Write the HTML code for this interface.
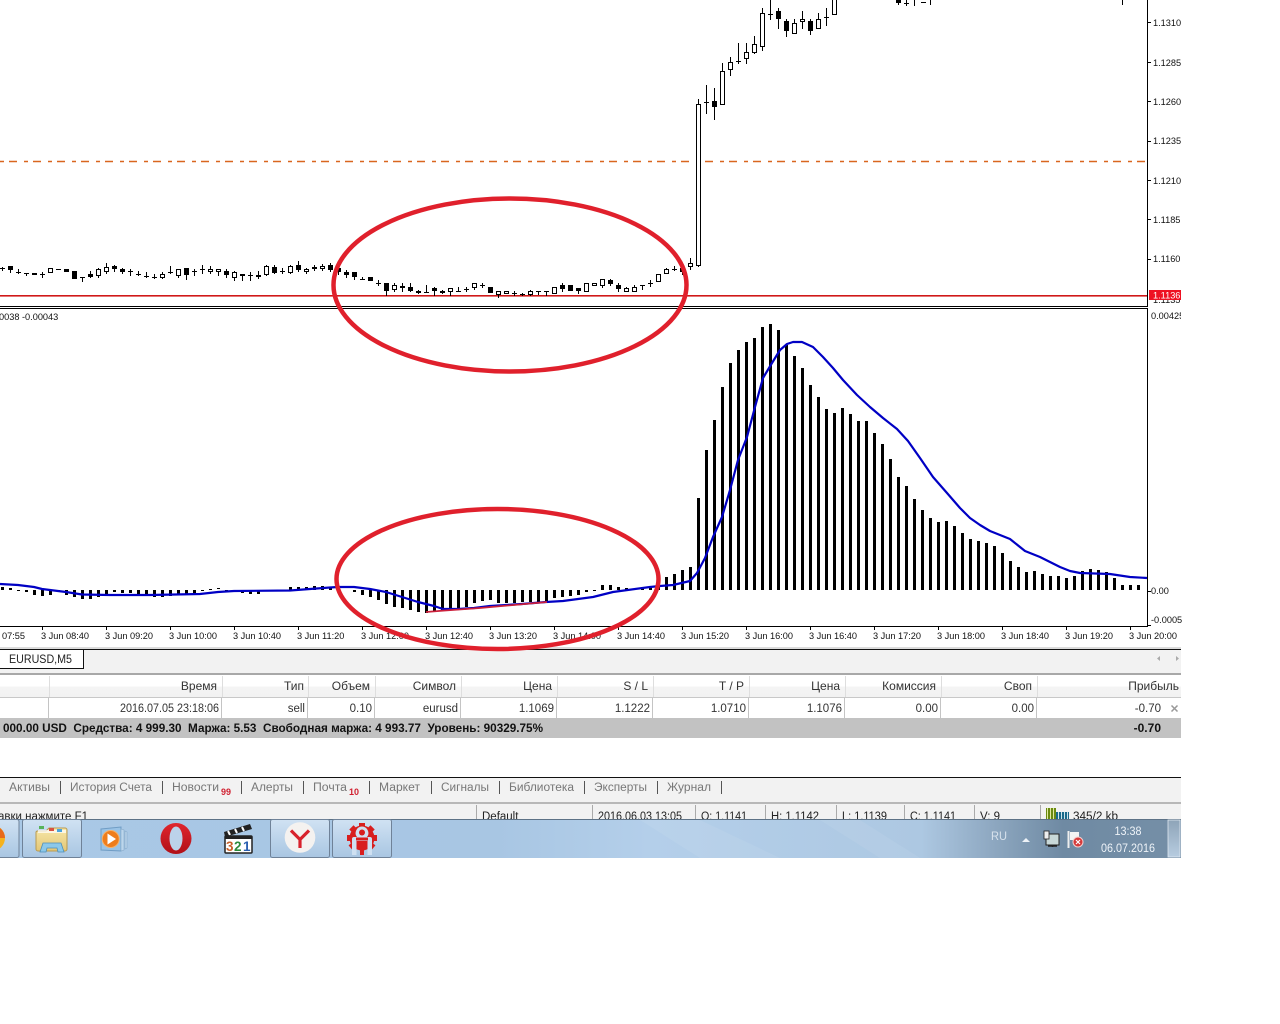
<!DOCTYPE html>
<html><head><meta charset="utf-8"><style>
html,body{margin:0;padding:0;background:#fff;width:1280px;height:1024px;overflow:hidden}
svg{display:block}
text{font-family:"Liberation Sans","DejaVu Sans",sans-serif;fill:#222}
.a text{font-size:9.2px;fill:#111}
.t text{font-size:9.2px;fill:#111}
.h text{font-size:11.5px;text-anchor:end;fill:#333}
.hh text{font-size:12px;text-anchor:end;fill:#333}
.m text{font-size:11.5px;fill:#777}
.s text{font-size:11.5px;fill:#222}
</style></head><body>
<svg width="1280" height="1024" viewBox="0 0 1280 1024" xmlns="http://www.w3.org/2000/svg">
<defs>
<linearGradient id="tb" x1="0" x2="1" y1="0" y2="0">
<stop offset="0" stop-color="#a9c8e6"/><stop offset=".42" stop-color="#a8c6e3"/><stop offset=".55" stop-color="#b4cfea"/><stop offset=".78" stop-color="#adc8e2"/><stop offset=".84" stop-color="#8ea8c1"/><stop offset=".9" stop-color="#6f8aa3"/><stop offset="1" stop-color="#758fa7"/>
</linearGradient>
<linearGradient id="hd" x1="0" x2="0" y1="0" y2="1"><stop offset="0" stop-color="#fff"/><stop offset=".5" stop-color="#fff"/><stop offset=".55" stop-color="#f4f4f4"/><stop offset="1" stop-color="#f2f2f2"/></linearGradient>
<linearGradient id="bt" x1="0" x2="0" y1="0" y2="1"><stop offset="0" stop-color="#d0e2f3"/><stop offset="1" stop-color="#a9c6e2"/></linearGradient>
<linearGradient id="fo" x1="0" x2="0" y1="0" y2="1"><stop offset="0" stop-color="#f7e7a8"/><stop offset="1" stop-color="#e3c777"/></linearGradient>
<linearGradient id="sd" x1="0" x2="0" y1="0" y2="1"><stop offset="0" stop-color="#8ea4b8"/><stop offset="1" stop-color="#b7cce0"/></linearGradient>
<linearGradient id="op" x1="0" x2="0" y1="0" y2="1"><stop offset="0" stop-color="#e0262e"/><stop offset="1" stop-color="#b01018"/></linearGradient>
</defs>
<rect width="1280" height="1024" fill="#fff"/>

<!-- colored horizontal lines -->
<rect x="0" y="295" width="1148" height="1.600" fill="#d01818"/>
<path d="M0 161.500H1148" stroke="#d9661f" stroke-width="1.600" fill="none" stroke-dasharray="8 7 4 5" stroke-dashoffset="15"/>

<!-- main chart -->
<g shape-rendering="crispEdges">
<path d="M2.5 267V271M10.5 266V273M18.5 269V274M26.5 273V276M42.5 272V278M82.5 277V282M90.5 271V278M98.5 268V278M106.5 263V274M114.5 265V272M122.5 268V274M130.5 269V276M138.5 271V276M146.5 272V278M154.5 274V279M162.5 272V279M170.5 266V274M178.5 269V278M186.5 268V280M194.5 269V276M202.5 265V274M210.5 266V274M218.5 269V276M226.5 269V278M234.5 271V281M242.5 274V281M250.5 272V281M258.5 271V279M266.5 265V276M274.5 265V274M282.5 268V274M290.5 265V274M298.5 261V272M306.5 268V274M314.5 265V271M322.5 264V271M330.5 263V272M338.5 267V275M346.5 270V278M354.5 272V280M362.5 277V280M378.5 280V286M386.5 283V296M394.5 283V292M402.5 283V292M410.5 283V292M418.5 290V294M426.5 285V293M434.5 287V296M442.5 290V294M450.5 288V296M458.5 287V292M466.5 287V292M474.5 283V290M482.5 283V288M498.5 291V298M514.5 291V296M522.5 293V296M530.5 290V296M538.5 291V295M546.5 291V296M562.5 283V292M578.5 288V294M602.5 279V288M610.5 279V286M618.5 283V292M626.5 287V292M634.5 285V292M642.5 285V290M650.5 280V287M666.5 268V274M674.5 266V271M682.5 268V275M690.5 258V270M698.5 99V267M706.5 85V114M714.5 88V120M722.5 63V72M730.5 57V76M738.5 43V64M746.5 43V64M754.5 36V54M762.5 8V51M770.5 0V20M778.5 8V29M786.5 19V37M794.5 19V34M802.5 11V29M810.5 19V35M818.5 13V29M826.5 8V26M898.5 0V5M906.5 0V6M914.5 0V6M930.5 0V5M1122.5 0V5
M0 268.5h5M16 272.5h5M24 273.5h5M40 274.5h5M56 269.5h5M80 277.5h5M128 271.5h5M136 274.5h5M144 276.5h5M152 277.5h5M168 272.5h5M192 271.5h5M200 269.5h5M248 275.5h5M280 271.5h5M360 279.5h5M376 283.5h5M424 292.5h5M456 291.5h5M464 289.5h5M480 285.5h5M512 293.5h5M520 294.5h5M536 291.5h5M544 291.5h5M640 285.5h5M648 283.5h5M672 269.5h5M704 102.5h5M736 61.5h5M768 14.5h5M824 17.5h5M904 3.5h5M921 2.5h5" stroke="#000" stroke-width="1" fill="none"/>
<path d="M32.5 273.5h4v1h-4zM48.5 268.5h4v4h-4zM96.5 269.5h4v6h-4zM104.5 267.5h4v4h-4zM160.5 274.5h4v3h-4zM176.5 269.5h4v6h-4zM208.5 269.5h4v2h-4zM216.5 269.5h4v2h-4zM232.5 272.5h4v5h-4zM264.5 266.5h4v8h-4zM288.5 266.5h4v6h-4zM304.5 269.5h4v2h-4zM320.5 266.5h4v2h-4zM392.5 285.5h4v4h-4zM448.5 288.5h4v3h-4zM472.5 283.5h4v4h-4zM496.5 291.5h4v3h-4zM504.5 291.5h4v2h-4zM528.5 291.5h4v3h-4zM552.5 287.5h4v6h-4zM584.5 283.5h4v8h-4zM592.5 283.5h4v2h-4zM600.5 279.5h4v6h-4zM624.5 288.5h4v3h-4zM632.5 287.5h4v4h-4zM656.5 274.5h4v7h-4zM664.5 269.5h4v4h-4zM688.5 263.5h4v3h-4zM696.5 104.5h4v161h-4zM720.5 71.5h4v33h-4zM728.5 62.5h4v7h-4zM744.5 52.5h4v6h-4zM752.5 44.5h4v8h-4zM760.5 13.5h4v33h-4zM792.5 23.5h4v10h-4zM800.5 19.5h4v2h-4zM816.5 19.5h4v9h-4zM832.5 -3.5h4v18h-4z" fill="#fff" stroke="#000" stroke-width="1"/>
<path d="M8 266h5v4h-5zM64 269h5v3h-5zM72 271h5v8h-5zM88 274h5v3h-5zM112 266h5v3h-5zM120 269h5v3h-5zM184 268h5v7h-5zM224 271h5v4h-5zM240 274h5v2h-5zM256 275h5v2h-5zM272 267h5v6h-5zM296 265h5v5h-5zM312 267h5v2h-5zM328 265h5v5h-5zM336 268h5v4h-5zM344 272h5v3h-5zM352 272h5v5h-5zM368 277h5v4h-5zM384 283h5v8h-5zM400 286h5v2h-5zM408 287h5v4h-5zM416 291h5v2h-5zM432 288h5v3h-5zM440 291h5v2h-5zM488 287h5v6h-5zM560 285h5v4h-5zM568 285h5v6h-5zM576 288h5v3h-5zM608 280h5v4h-5zM616 285h5v4h-5zM680 268h5v4h-5zM712 101h5v6h-5zM776 11h5v8h-5zM784 21h5v10h-5zM808 21h5v10h-5zM896 0h5v3h-5z" fill="#000"/>

<!-- frame lines -->
<path d="M1147.5 0V306M0 306.5H1148M0 308.5H1148M1147.5 309V627M0 626.5H1148" stroke="#000" stroke-width="1" fill="none"/>
<path d="M1148 22.5h3M1148 62.5h3M1148 101.5h3M1148 141.5h3M1148 180.5h3M1148 219.5h3M1148 259.5h3M1148 591.5h3M1148 625.5h3" stroke="#000" fill="none"/>
<path d="M42.5 627v3M106.5 627v3M170.5 627v3M234.5 627v3M298.5 627v3M362.5 627v3M426.5 627v3M490.5 627v3M554.5 627v3M618.5 627v3M682.5 627v3M746.5 627v3M810.5 627v3M874.5 627v3M938.5 627v3M1002.5 627v3M1066.5 627v3M1130.5 627v3" stroke="#000" fill="none"/>

<!-- histogram -->
<path d="M2.5 590V587M10.5 590V588M18.5 590V591M26.5 590V592M34.5 590V595M42.5 590V596M50.5 590V595M58.5 590V592M66.5 590V595M74.5 590V597M82.5 590V599M90.5 590V599M98.5 590V597M106.5 590V595M114.5 590V592M122.5 590V593M130.5 590V593M138.5 590V595M146.5 590V595M154.5 590V597M162.5 590V597M170.5 590V596M178.5 590V594M186.5 590V594M194.5 590V593M202.5 590V591M210.5 589V590M218.5 588V589M226.5 590V592M234.5 590V592M242.5 590V593M250.5 590V594M258.5 590V594M290.5 587V590M298.5 587V590M306.5 587V590M314.5 586V590M322.5 586V590M330.5 587V590M354.5 590V592M362.5 590V595M370.5 590V597M378.5 590V600M386.5 590V604M394.5 590V607M402.5 590V608M410.5 590V610M418.5 590V612M426.5 590V613M434.5 590V612M442.5 590V610M450.5 590V609M458.5 590V608M466.5 590V607M474.5 590V603M482.5 590V601M490.5 590V600M498.5 590V603M506.5 590V603M514.5 590V603M522.5 590V602M530.5 590V602M538.5 590V602M546.5 590V601M554.5 590V598M562.5 590V597M570.5 590V596M578.5 590V595M586.5 590V592M594.5 590V591M602.5 590V585M610.5 590V585M618.5 590V587M626.5 590V588M634.5 590V589M642.5 590V587M650.5 590V587M658.5 590V584M666.5 590V577M674.5 590V574M682.5 590V570M690.5 590V567M698.5 590V498M706.5 590V450M714.5 590V420M722.5 590V387M730.5 590V363M738.5 590V350M746.5 590V342M754.5 590V338M762.5 590V327M770.5 590V324M778.5 590V330M786.5 590V345M794.5 590V356M802.5 590V368M810.5 590V385M818.5 590V397M826.5 590V409M834.5 590V413M842.5 590V408M850.5 590V414M858.5 590V421M866.5 590V421M874.5 590V433M882.5 590V444M890.5 590V459M898.5 590V477M906.5 590V486M914.5 590V499M922.5 590V510M930.5 590V518M938.5 590V522M946.5 590V521M954.5 590V526M962.5 590V533M970.5 590V539M978.5 590V541M986.5 590V543M994.5 590V546M1002.5 590V553M1010.5 590V561M1018.5 590V567M1026.5 590V572M1034.5 590V571M1042.5 590V574M1050.5 590V576M1058.5 590V576M1066.5 590V578M1074.5 590V576M1082.5 590V571M1090.5 590V569M1098.5 590V570M1106.5 590V572M1114.5 590V578M1122.5 590V585M1130.5 590V585M1138.5 590V585" stroke="#000" stroke-width="3" fill="none"/>
</g>
<!-- signal line -->
<path d="M0 584L18 585L34 587L42 589L50 590L66 592L82 594.5L110 595L150 595L200 594L218 592L234 591L290 590.5L330 587.5L338 587L354 587L370 589L386 592L402 597L418 602L434 606L443 609L458 609L474 608L490 606L522 604L546 602L563 601L593 597L613 592L650 587L660 586L673 585L690 581L697 573L705 558L713 537L722 517L730 490L738 460L747 437L755 407L763 378L772 363L780 350L787 344L793 342L802 342L813 347L823 357L833 368L843 380L857 395L870 407L883 418L897 429L908 441L920 458L933 477L947 493L960 508L970 518L980 525L990 531L1010 539L1025 551L1040 557L1060 567L1070 571L1080 573L1110 574L1130 577L1147 578" fill="none" stroke="#0000c4" stroke-width="2.200" stroke-linejoin="round"/>
<path d="M426 612L445 610.500L480 608L547 602" fill="none" stroke="#cc1f3a" stroke-width="1.800"/>

<!-- axis labels -->
<g class="a">
<text x="1153" y="26">1.1310</text>
<text x="1153" y="66">1.1285</text>
<text x="1153" y="105">1.1260</text>
<text x="1153" y="144">1.1235</text>
<text x="1153" y="184">1.1210</text>
<text x="1153" y="223">1.1185</text>
<text x="1153" y="262">1.1160</text>
<text x="1151" y="594">0.00</text>
<text x="1151" y="623">-0.0005</text>
</g>
<svg x="1148" y="286" width="33" height="36" viewBox="1148 286 33 36">
<g class="a"><text x="1153" y="303">1.1135</text></g>
<rect x="1149" y="290" width="32" height="10" fill="#ee1122"/>
<text x="1153" y="298.500" font-size="9.200" style="fill:#fff">1.1136</text>
<text x="1151" y="319" font-size="9.200" style="fill:#111">0.00425</text>
</svg>
<text x="-1" y="320" font-size="9.200" style="fill:#111">0038 -0.00043</text>

<!-- time labels -->
<g class="t">
<text x="2" y="639">07:55</text>
<text x="41" y="639">3 Jun 08:40</text>
<text x="105" y="639">3 Jun 09:20</text>
<text x="169" y="639">3 Jun 10:00</text>
<text x="233" y="639">3 Jun 10:40</text>
<text x="297" y="639">3 Jun 11:20</text>
<text x="361" y="639">3 Jun 12:00</text>
<text x="425" y="639">3 Jun 12:40</text>
<text x="489" y="639">3 Jun 13:20</text>
<text x="553" y="639">3 Jun 14:00</text>
<text x="617" y="639">3 Jun 14:40</text>
<text x="681" y="639">3 Jun 15:20</text>
<text x="745" y="639">3 Jun 16:00</text>
<text x="809" y="639">3 Jun 16:40</text>
<text x="873" y="639">3 Jun 17:20</text>
<text x="937" y="639">3 Jun 18:00</text>
<text x="1001" y="639">3 Jun 18:40</text>
<text x="1065" y="639">3 Jun 19:20</text>
<text x="1129" y="639">3 Jun 20:00</text>
</g>

<!-- tab bar -->
<g shape-rendering="crispEdges">
<rect x="0" y="647" width="1181" height="2" fill="#dcdcdc"/>
<rect x="0" y="650" width="1181" height="23" fill="#f2f2f2"/>
<rect x="0" y="649" width="1181" height="1" fill="#111"/>
<rect x="0" y="650" width="83" height="18" fill="#fff"/>
<path d="M83.500 650V668.500H0" stroke="#111" fill="none"/>
<rect x="0" y="673" width="1181" height="2" fill="#a8a8a8"/>
<rect x="0" y="675" width="1181" height="22" fill="url(#hd)"/>
<rect x="0" y="697" width="1181" height="1" fill="#c8c8c8"/>
<rect x="0" y="698" width="1181" height="20" fill="#fff"/>
<rect x="0" y="718" width="1181" height="20" fill="#c2c2c2"/>
<path d="M49.500 676v21M222.500 676v21M308.500 676v21M375.500 676v21M461.500 676v21M557.500 676v21M653.500 676v21M749.500 676v21M845.500 676v21M941.500 676v21M1037.500 676v21" stroke="#dedede" fill="none"/>
<path d="M48.500 698v20M221.500 698v20M307.500 698v20M374.500 698v20M460.500 698v20M556.500 698v20M652.500 698v20M748.500 698v20M844.500 698v20M940.500 698v20M1036.500 698v20" stroke="#c4c4c4" fill="none"/>
</g>
<text x="9" y="663" font-size="11.500" textLength="63" lengthAdjust="spacingAndGlyphs">EURUSD,M5</text>
<path d="M1160 656l-3 2.500 3 2.500zM1176 656l3 2.500-3 2.500z" fill="#aaa"/>
<g class="hh">
<text x="217" y="690">Время</text>
<text x="304" y="690">Тип</text>
<text x="370" y="690">Объем</text>
<text x="456" y="690">Символ</text>
<text x="552" y="690">Цена</text>
<text x="648" y="690">S / L</text>
<text x="744" y="690">T / P</text>
<text x="840" y="690">Цена</text>
<text x="936" y="690">Комиссия</text>
<text x="1032" y="690">Своп</text>
<text x="1179" y="690">Прибыль</text>
</g>
<g class="h">
<text x="219" y="712" textLength="99" lengthAdjust="spacingAndGlyphs">2016.07.05 23:18:06</text>
<text x="305" y="712">sell</text>
<text x="372" y="712">0.10</text>
<text x="458" y="712">eurusd</text>
<text x="554" y="712">1.1069</text>
<text x="650" y="712">1.1222</text>
<text x="746" y="712">1.0710</text>
<text x="842" y="712">1.1076</text>
<text x="938" y="712">0.00</text>
<text x="1034" y="712">0.00</text>
<text x="1161" y="712">-0.70</text>
</g>
<path d="M1171.500 705.500l6 6M1177.500 705.500l-6 6" stroke="#999" stroke-width="1.500" fill="none"/>
<text x="3" y="732" font-size="11.500" font-weight="bold" textLength="540" lengthAdjust="spacingAndGlyphs" style="fill:#111;white-space:pre" xml:space="preserve">000.00 USD  Средства: 4 999.30  Маржа: 5.53  Свободная маржа: 4 993.77  Уровень: 90329.75%</text>
<text x="1161" y="732" font-size="12" font-weight="bold" text-anchor="end" style="fill:#111">-0.70</text>

<!-- terminal tabs -->
<g shape-rendering="crispEdges">
<rect x="0" y="777" width="1181" height="1" fill="#111"/>
<rect x="0" y="778" width="1181" height="24" fill="#f2f2f2"/>
<rect x="0" y="802" width="1181" height="2" fill="#b8b8b8"/>
<rect x="0" y="804" width="1181" height="16" fill="#f2f2f2"/>
<path d="M60.500 781v13M162.500 781v13M241.500 781v13M303.500 781v13M369.500 781v13M431.500 781v13M499.500 781v13M584.500 781v13M657.500 781v13M721.500 781v13" stroke="#555" fill="none"/>
<path d="M476.500 805v15M592.500 805v15M695.500 805v15M765.500 805v15M836.500 805v15M904.500 805v15M974.500 805v15M1040.500 805v15" stroke="#aaa" fill="none"/>
</g>
<g class="m">
<text x="9" y="791" textLength="41" lengthAdjust="spacingAndGlyphs">Активы</text>
<text x="70" y="791" textLength="82" lengthAdjust="spacingAndGlyphs">История Счета</text>
<text x="172" y="791" textLength="47" lengthAdjust="spacingAndGlyphs">Новости</text>
<text x="251" y="791" textLength="42" lengthAdjust="spacingAndGlyphs">Алерты</text>
<text x="313" y="791" textLength="34" lengthAdjust="spacingAndGlyphs">Почта</text>
<text x="379" y="791" textLength="41" lengthAdjust="spacingAndGlyphs">Маркет</text>
<text x="441" y="791" textLength="48" lengthAdjust="spacingAndGlyphs">Сигналы</text>
<text x="509" y="791" textLength="65" lengthAdjust="spacingAndGlyphs">Библиотека</text>
<text x="594" y="791" textLength="53" lengthAdjust="spacingAndGlyphs">Эксперты</text>
<text x="667" y="791" textLength="44" lengthAdjust="spacingAndGlyphs">Журнал</text>
</g>
<text x="221" y="795" font-size="9" font-weight="bold" style="fill:#d02030">99</text>
<text x="349" y="795" font-size="9" font-weight="bold" style="fill:#d02030">10</text>
<g class="s">
<text x="-2" y="820" textLength="90" lengthAdjust="spacingAndGlyphs">авки нажмите F1</text>
<text x="482" y="820">Default</text>
<text x="598" y="820" textLength="84" lengthAdjust="spacingAndGlyphs">2016.06.03 13:05</text>
<text x="701" y="820" textLength="46" lengthAdjust="spacingAndGlyphs">O: 1.1141</text>
<text x="771" y="820" textLength="48" lengthAdjust="spacingAndGlyphs">H: 1.1142</text>
<text x="842" y="820" textLength="45" lengthAdjust="spacingAndGlyphs">L: 1.1139</text>
<text x="910" y="820" textLength="46" lengthAdjust="spacingAndGlyphs">C: 1.1141</text>
<text x="980" y="820">V: 9</text>
<text x="1073" y="820" textLength="45" lengthAdjust="spacingAndGlyphs">345/2 kb</text>
</g>
<g shape-rendering="crispEdges">
<rect x="1046" y="808" width="10" height="12" fill="#6a8a10"/>
<path d="M1047.500 808v12M1050.500 808v12M1053.500 808v12" stroke="#dfe8a0" fill="none"/>
<rect x="1056" y="812" width="13" height="8" fill="#1a6a8a"/>
<path d="M1058.500 812v8M1061.500 812v8M1064.500 812v8M1067.500 812v8" stroke="#cfe4ea" fill="none"/>
</g>

<!-- taskbar -->
<rect x="0" y="819" width="1181" height="39" fill="url(#tb)"/>
<rect x="0" y="819" width="1181" height="1" fill="#5d7286"/>
<path d="M640 820L700 858H780L700 820zM820 820L880 858H920L860 820z" fill="#fff" opacity=".07"/>
<!-- buttons -->
<g fill="url(#bt)" stroke="#6f8298" stroke-width="1">
<rect x="-5" y="819.500" width="24" height="38" rx="2"/>
<rect x="22.500" y="819.500" width="59" height="38" rx="2"/>
<rect x="270.500" y="819.500" width="59" height="38" rx="2"/>
<rect x="332.500" y="819.500" width="59" height="38" rx="2"/>
</g>
<!-- left partial icon -->
<circle cx="-8" cy="838" r="13" fill="#f5b21e"/>
<path d="M0 828a13 13 0 0 1 5 10h-5z" fill="#e86a1a"/>
<!-- folder -->
<path d="M37 831h9l3-3h16a2 2 0 0 1 2 2v19a2 2 0 0 1-2 2H38a2 2 0 0 1-2-2V832z" fill="url(#fo)" stroke="#b89a50"/>
<path d="M38 830h28v3H38z" fill="#fff" opacity=".7"/>
<rect x="39" y="826" width="5" height="3" fill="#56b35a"/><rect x="49" y="828" width="5" height="3" fill="#d8513f"/><rect x="57" y="829" width="5" height="3" fill="#4aa3dc"/>
<path d="M43 843h18l3 9h-6l-1-4H47l-1 4h-6z" fill="#8cc8ea" stroke="#4f8fb8" stroke-width=".8"/>
<!-- media player -->
<path d="M101 829l20-2v24l-20-1z" fill="#9ac3e6" stroke="#6f9cc4"/>
<path d="M121 829l3 1v20l-3 1zM125 831l2 1v16l-2 1z" fill="#bcd6ec" stroke="#86aac9" stroke-width=".6"/>
<circle cx="110.700" cy="839" r="8.500" fill="#ee7d1c" stroke="#f6b26a" stroke-width="1"/>
<path d="M107.500 833.500l8.500 5.500-8.500 5.500z" fill="#fff"/>
<!-- opera -->
<ellipse cx="176" cy="838.500" rx="15.500" ry="15.500" fill="url(#op)"/>
<ellipse cx="176" cy="838.500" rx="6.500" ry="12" fill="#bcd2ea"/>
<!-- clapper -->
<path d="M224 832l26-8 2 5-27 8z" fill="#222"/>
<path d="M228 831l2 4M235 829l2 4M242 827l2 4" stroke="#fff" stroke-width="2"/>
<rect x="225" y="836" width="27" height="17" rx="1" fill="#fff" stroke="#222" stroke-width="1.500"/>
<rect x="225" y="836" width="27" height="3" fill="#222"/>
<text x="226" y="851" font-size="13.500" font-weight="bold" style="fill:#c8602a">3</text>
<text x="234" y="851" font-size="13.500" font-weight="bold" style="fill:#2a8a3a">2</text>
<text x="243" y="851" font-size="13.500" font-weight="bold" style="fill:#2a5fb0">1</text>
<!-- yandex -->
<circle cx="300" cy="837.500" r="15.300" fill="#f4f2f0"/>
<path d="M291 830.500L300 839.500V848M309 830.500L300 839.500" fill="none" stroke="#d8222c" stroke-width="3.200"/>
<!-- gear -->
<g fill="#d81e1e">
<circle cx="362" cy="838" r="12.500"/>
<g id="teeth">
<path d="M359 823h6v5h-6z"/>
<path d="M359 823h6v5h-6z" transform="rotate(45 362 838)"/>
<path d="M359 823h6v5h-6z" transform="rotate(-45 362 838)"/>
<path d="M359 823h6v5h-6z" transform="rotate(90 362 838)"/>
<path d="M359 823h6v5h-6z" transform="rotate(-90 362 838)"/>
<path d="M359 823h6v5h-6z" transform="rotate(130 362 838)"/>
<path d="M359 823h6v5h-6z" transform="rotate(-130 362 838)"/>
</g>
<path d="M362 826.500a6.500 6.500 0 0 1 5 10.500h3a2 2 0 0 1 2 2V855h-4.500V841h-3.500V855H360V841h-3.500V855H352V839a2 2 0 0 1 2-2h3a6.500 6.500 0 0 1 5-10.500z" fill="#cfe0f1"/>
<path d="M360 841h4v14h-4z"/>
<path d="M356 837.500h12v3h-12z"/>
<circle cx="362" cy="832.500" r="3"/>
</g>
<!-- tray -->
<text x="991" y="840" font-size="12" style="fill:#d8e2ec" textLength="16" lengthAdjust="spacingAndGlyphs">RU</text>
<path d="M1022 842l4-4 4 4z" fill="#eef3f8"/>
<rect x="1046" y="834" width="13" height="11" fill="#c8d8d8" stroke="#222" stroke-width="1"/>
<path d="M1048 846h9M1052.500 845v2" stroke="#222" stroke-width="1.500"/>
<rect x="1044" y="831" width="5" height="8" fill="#eee" stroke="#222" stroke-width=".8"/>
<path d="M1068.500 831v17" stroke="#eee" stroke-width="2"/>
<path d="M1070 832h9v8h-9z" fill="#f4f4f4"/>
<circle cx="1078" cy="842" r="5" fill="#d63a3a" stroke="#f4d0d0"/>
<path d="M1076 840l4 4M1080 840l-4 4" stroke="#fff" stroke-width="1.200"/>
<text x="1128" y="835" font-size="12" text-anchor="middle" style="fill:#eef3f8" textLength="27" lengthAdjust="spacingAndGlyphs">13:38</text>
<text x="1128" y="852" font-size="12" text-anchor="middle" style="fill:#eef3f8" textLength="54" lengthAdjust="spacingAndGlyphs">06.07.2016</text>
<rect x="1168" y="820" width="12" height="37" fill="url(#sd)" stroke="#dfe8f0" stroke-width=".8"/>

<!-- annotation ellipses -->
<ellipse cx="510" cy="285" rx="176.500" ry="86.500" fill="none" stroke="#e0202c" stroke-width="4.500"/>
<ellipse cx="497.500" cy="579" rx="161" ry="70" fill="none" stroke="#e0202c" stroke-width="4.500"/>
</svg>
</body></html>
